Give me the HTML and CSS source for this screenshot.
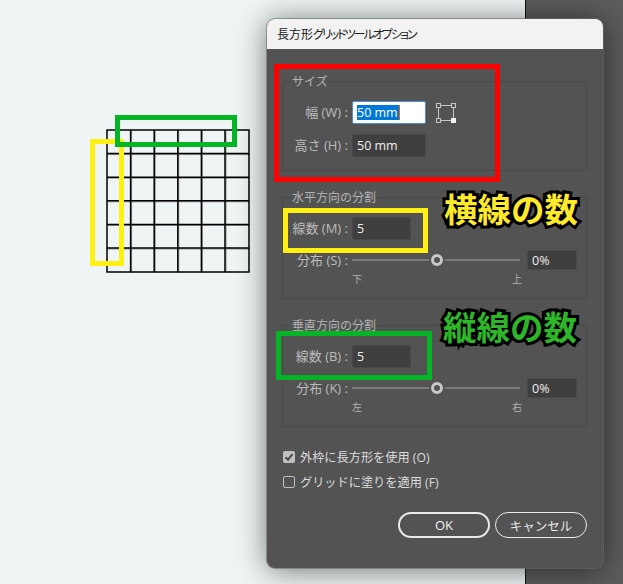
FILE: index.html
```html
<!DOCTYPE html>
<html lang="ja">
<head>
<meta charset="utf-8">
<title>長方形グリッドツールオプション</title>
<link rel="stylesheet" href="styles.css">
</head>
<body>
<div class="desktop">
  <div class="canvas"></div>
  <div class="side"></div>

  <svg class="grid" width="144" height="144" viewBox="0 0 144 144">
    <g class="grid-shadow">
      <path d="M25.6 2V144M49.2 2V144M72.8 2V144M96.4 2V144M120 2V144M2 25.6H144M2 49.2H144M2 72.8H144M2 96.4H144M2 120H144"/>
    </g>
    <g class="grid-lines">
      <path d="M1 1H143V143H1Z"/>
      <path d="M24.6 1V143M48.2 1V143M71.8 1V143M95.4 1V143M119 1V143M1 24.6H143M1 48.2H143M1 71.8H143M1 95.4H143M1 119H143"/>
    </g>
  </svg>
  <div class="mark mark-canvas-yellow"></div>
  <div class="mark mark-canvas-green"></div>

  <section class="dialog">
    <header class="title">長方形<span class="title-kana">グリッドツールオプション</span></header>
    <div class="body">
      <fieldset class="group group-size">
        <legend>サイズ</legend>
        <div class="row">
          <span class="label">幅 (W) :</span>
          <span class="field field-wide field-active"><span class="selected">50 mm</span></span>
          <svg class="bounds" width="20" height="20" viewBox="0 0 20 20">
            <path class="bounds-line" d="M3 2.500H17M2.500 3V17M17.500 3V17M3 17.500H17"/>
            <rect class="bounds-node" x="0.5" y="0.5" width="4" height="4"/>
            <rect class="bounds-node" x="15.5" y="0.5" width="4" height="4"/>
            <rect class="bounds-node" x="0.5" y="15.5" width="4" height="4"/>
            <rect class="bounds-node-on" x="15" y="15" width="5" height="5"/>
          </svg>
        </div>
        <div class="row">
          <span class="label">高さ (H) :</span>
          <span class="field field-wide">50 mm</span>
        </div>
      </fieldset>

      <fieldset class="group group-split">
        <legend>水平方向の分割</legend>
        <div class="row">
          <span class="label">線数 (M) :</span>
          <span class="field field-count">5</span>
        </div>
        <div class="row row-slider">
          <span class="label">分布 (S) :</span>
          <div class="slider"><span class="thumb"></span></div>
          <span class="field field-percent">0%</span>
        </div>
        <div class="ends"><span>下</span><span>上</span></div>
      </fieldset>

      <fieldset class="group group-split">
        <legend>垂直方向の分割</legend>
        <div class="row">
          <span class="label">線数 (B) :</span>
          <span class="field field-count">5</span>
        </div>
        <div class="row row-slider">
          <span class="label">分布 (K) :</span>
          <div class="slider"><span class="thumb"></span></div>
          <span class="field field-percent">0%</span>
        </div>
        <div class="ends"><span>左</span><span>右</span></div>
      </fieldset>

      <div class="checks">
        <div class="check">
          <span class="box box-on">
            <svg width="12" height="12" viewBox="0 0 12 12"><path d="M2.500 6.200L5 8.700L9.500 3.200"/></svg>
          </span>
          <span class="check-text">外枠に長方形を使用 (O)</span>
        </div>
        <div class="check">
          <span class="box"></span>
          <span class="check-text">グリッドに塗りを適用 (F)</span>
        </div>
      </div>

      <div class="actions">
        <span class="btn btn-primary">OK</span>
        <span class="btn">キャンセル</span>
      </div>
    </div>
  </section>

  <div class="mark mark-red"></div>
  <div class="mark mark-yellow"></div>
  <div class="mark mark-green"></div>
  <div class="callout callout-yellow">横線の数</div>
  <div class="callout callout-green">縦線の数</div>
</div>
</body>
</html>
```

FILE: styles.css
```css
* { box-sizing: border-box; }

html, body {
  margin: 0;
  padding: 0;
  width: 623px;
  height: 584px;
  overflow: hidden;
}

body {
  font-family: "Open Sans", "Noto Sans CJK JP", sans-serif;
}

.desktop {
  position: relative;
  display: flex;
  width: 623px;
  height: 584px;
  overflow: hidden;
}

.canvas {
  width: 526px;
  background: #eff5f5;
  border-right: 1px solid #111;
}

.side {
  flex: 1;
  background: #5c5c5c;
}

/* free-canvas artwork */
.grid {
  position: absolute;
  left: 106px;
  top: 129px;
}

.grid-shadow path {
  fill: none;
  stroke: #8e8e8e;
  stroke-width: 1;
}

.grid-lines path {
  fill: none;
  stroke: #000;
  stroke-width: 1.5;
}

.mark {
  position: absolute;
  border-style: solid;
  border-width: 5px;
}

.mark-canvas-yellow {
  left: 90px;
  top: 139px;
  width: 34px;
  height: 127px;
  border-color: #fff014;
}

.mark-canvas-green {
  left: 115px;
  top: 115px;
  width: 122px;
  height: 32px;
  border-color: #04b526;
}

.mark-red {
  left: 274px;
  top: 64px;
  width: 226px;
  height: 118px;
  border-color: #ff0000;
}

.mark-yellow {
  left: 283px;
  top: 208px;
  width: 145px;
  height: 45px;
  border-color: #fff014;
}

.mark-green {
  left: 276px;
  top: 331px;
  width: 156px;
  height: 49px;
  border-color: #04b526;
}

.callout {
  position: absolute;
  font-family: "Noto Sans CJK JP", sans-serif;
  font-size: 33.500px;
  line-height: 40px;
  font-weight: 700;
  white-space: nowrap;
  -webkit-text-stroke: 6px #000;
  paint-order: stroke fill;
}

.callout-yellow {
  left: 444px;
  top: 188px;
  color: #ffe92c;
}

.callout-green {
  left: 443px;
  top: 306px;
  color: #2eb52a;
}

/* dialog */
.dialog {
  position: absolute;
  left: 267px;
  top: 19px;
  width: 336px;
  height: 549px;
  border-radius: 8px;
  overflow: hidden;
  background: #535353;
  box-shadow: 0 0 0 1px rgba(110, 110, 110, 0.6), 0 2px 30px rgba(0, 0, 0, 0.55);
}

.title {
  height: 30px;
  padding-left: 10px;
  background: #f2f2f2;
  color: #222;
  font-family: "Noto Sans CJK JP", sans-serif;
  font-feature-settings: "palt";
  font-size: 12px;
  line-height: 29px;
  white-space: nowrap;
}

.title-kana {
  letter-spacing: -2px;
}

.body {
  padding: 25px 16px 0 15px;
}

.group {
  margin: 0 0 19px;
  padding: 13px 0 13px;
  min-width: 0;
  border: 1px solid #4a4a4a;
  border-radius: 2px;
}

.group legend {
  margin-left: 8px;
  padding: 2px 1px 0;
  color: #b4b4b4;
  font-size: 12px;
  line-height: 12px;
}

.group-split {
  padding-bottom: 0;
}

.group-split:nth-of-type(2) { height: 109px; }
.group-split:nth-of-type(3) { height: 109px; margin-bottom: 0; }
.group-size { height: 97px; }

.row {
  display: flex;
  align-items: center;
  height: 23px;
  margin-bottom: 10px;
}

.row:last-child { margin-bottom: 0; }

.label {
  flex: none;
  width: 65px;
  margin-right: 4px;
  padding-bottom: 1px;
  text-align: right;
  color: #bcbcbc;
  font-size: 13px;
  line-height: 16px;
  white-space: nowrap;
}

.field {
  display: flex;
  align-items: center;
  flex: none;
  height: 23px;
  padding-left: 4px;
  background: #3f3f3f;
  border: 1px solid #484848;
  border-radius: 2px;
  color: #f0f0f0;
  font-size: 12.500px;
}

.field-wide { width: 74px; }
.field-count { width: 59px; }

.field-percent {
  width: 50px;
  height: 20px;
  margin-left: 7px;
  font-size: 12.500px;
}

.field-active {
  background: #fff;
  border-color: #4a90d9;
  color: #fff;
}

.selected {
  padding: 0 1px 0 0;
  line-height: 15px;
  background: #0078d7;
  border-right: 1px solid #e06a1a;
}

.bounds {
  margin-left: 10px;
  flex: none;
}

.bounds-line {
  fill: none;
  stroke: #c8c8c8;
  stroke-width: 1;
}

.bounds-node {
  fill: #535353;
  stroke: #c8c8c8;
  stroke-width: 1;
}

.bounds-node-on { fill: #f2f2f2; }

.row-slider {
  height: 20px;
  margin-bottom: 0;
}

.slider {
  position: relative;
  flex: none;
  width: 168px;
  height: 2px;
  background: #7c7c7c;
}

.thumb {
  position: absolute;
  left: 79px;
  top: -5px;
  width: 12px;
  height: 12px;
  background: #535353;
  border: 3px solid #c9c9c9;
  border-radius: 50%;
  box-shadow: 0 0 0 2px #535353;
}

.ends {
  display: flex;
  justify-content: space-between;
  width: 170px;
  margin: 2px 0 0 69px;
  color: #b4b4b4;
  font-size: 10px;
  line-height: 14px;
}

.checks {
  margin-top: 24px;
}

.check {
  display: flex;
  align-items: center;
  gap: 5px;
  height: 12px;
  margin-bottom: 13px;
  padding-left: 1px;
  color: #dcdcdc;
  font-size: 12.200px;
  white-space: nowrap;
}

.check-text {
  padding-bottom: 1px;
}

.box {
  flex: none;
  width: 12px;
  height: 12px;
  border: 1px solid #c0c0c0;
  border-radius: 2px;
}

.box-on {
  background: #c0c0c0;
  border: 0;
}

.box svg {
  display: block;
}

.box svg path {
  fill: none;
  stroke: #4a4a4a;
  stroke-width: 2;
}

.actions {
  display: flex;
  justify-content: flex-end;
  gap: 5px;
  margin-top: 24px;
}

.btn {
  display: flex;
  align-items: center;
  justify-content: center;
  width: 92px;
  height: 26px;
  border: 1px solid #eaeaea;
  border-radius: 13px;
  color: #e8e8e8;
  font-size: 12.500px;
}

.btn-primary {
  border-width: 2px;
  font-size: 13px;
  font-weight: 500;
  color: #f2f2f2;
}
```
